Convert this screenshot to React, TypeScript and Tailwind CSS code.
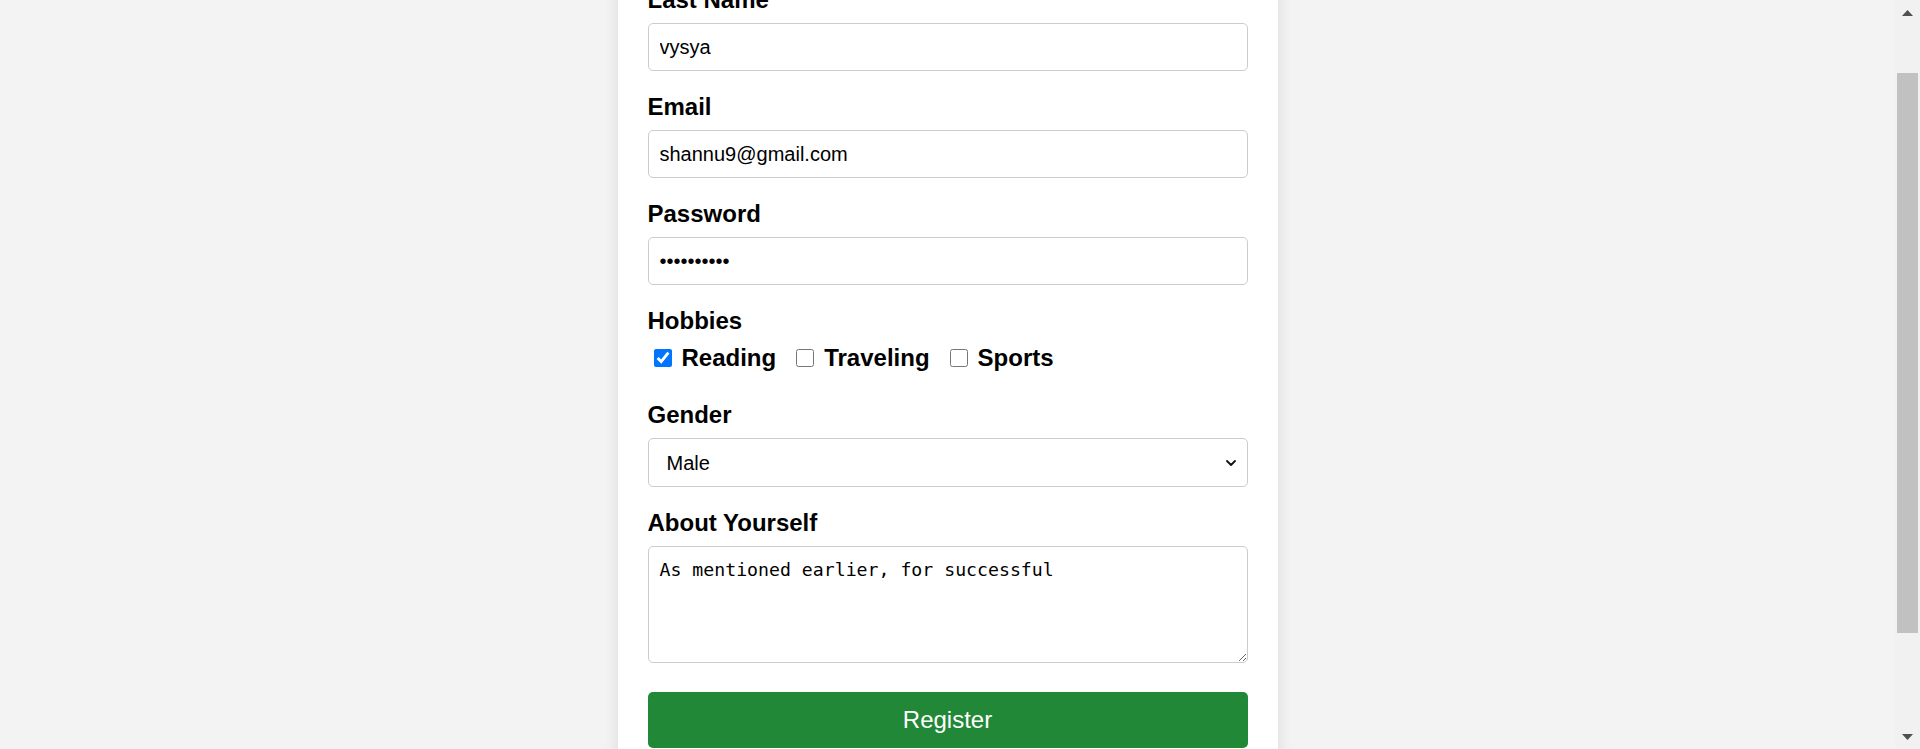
const labelCls = "block text-[24px] font-bold leading-[28px] text-black mb-[9px]"
const inputCls =
  "block w-full h-[48px] border border-[#cccccc] rounded-[5px] px-[11px] text-[20px] text-black bg-white outline-none"

const Field = ({ label, children }: { label: string; children: React.ReactNode }) => (
  <div className="mb-[22px]">
    <label className={labelCls}>{label}</label>
    {children}
  </div>
)

const Hobby = ({ name, checked }: { name: string; checked?: boolean }) => (
  <label className="flex items-center mr-[20px] text-[24px] font-bold leading-[28px] text-black">
    <input type="checkbox" defaultChecked={checked} className="w-[18px] h-[18px] m-0 mr-[10px] accent-[#0075ff]" />
    {name}
  </label>
)

// window scrollbar as it shows in the screenshot (scrolled a bit down)
const Scrollbar = () => (
  <div className="w-[25px] shrink-0 h-full flex flex-col items-center bg-[#f1f1f1]">
    <div className="h-[25px] w-full flex items-center justify-center">
      <svg width="11" height="6" viewBox="0 0 11 6">
        <path d="M0 6L5.5 0L11 6Z" fill="#505050" />
      </svg>
    </div>
    <div className="mt-[48px] w-[21px] h-[560px] bg-[#c1c1c1]" />
    <div className="flex-1" />
    <div className="h-[25px] w-full flex items-center justify-center">
      <svg width="11" height="6" viewBox="0 0 11 6">
        <path d="M0 0L5.5 6L11 0Z" fill="#505050" />
      </svg>
    </div>
  </div>
)

const App = () => {
  return (
    <div className="flex h-screen overflow-hidden bg-[#f3f3f3] font-['Liberation_Sans',Arial,sans-serif]">
      <div className="flex-1 h-full flex items-center justify-center">
        <div className="w-[660px] shrink-0 bg-white rounded-[8px] shadow-[0_0_15px_rgba(0,0,0,0.1)] px-[30px] pt-[30px] pb-[30px]">
          <h2 className="mt-[20px] mb-[60px] text-[40px] leading-[48px] font-bold text-center text-[#333]">Registration Form</h2>
          <form onSubmit={(e) => e.preventDefault()}>
            <Field label="First Name">
              <input className={inputCls} defaultValue="shannu" />
            </Field>
            <Field label="Last Name">
              <input className={inputCls} defaultValue="vysya" />
            </Field>
            <Field label="Email">
              <input type="email" className={inputCls} defaultValue="shannu9@gmail.com" />
            </Field>
            <Field label="Password">
              <input type="password" className={inputCls} defaultValue="shannu1234" />
            </Field>
            <div className="mb-[29px]">
              <span className={labelCls}>Hobbies</span>
              <div className="flex items-center h-[28px] pl-[6px]">
                <Hobby name="Reading" checked />
                <Hobby name="Traveling" />
                <Hobby name="Sports" />
              </div>
            </div>
            <Field label="Gender">
              <div className="relative">
                <select
                  defaultValue="male"
                  className="block w-full h-[49px] appearance-none border border-[#cccccc] rounded-[5px] pl-[18px] pr-[40px] text-[20px] text-black bg-white outline-none"
                >
                  <option value="male">Male</option>
                  <option value="female">Female</option>
                  <option value="other">Other</option>
                </select>
                <svg
                  className="absolute right-[12px] top-[22px] pointer-events-none"
                  width="10"
                  height="6"
                  viewBox="0 0 10 6"
                  fill="none"
                >
                  <path d="M1 1l4 4 4-4" stroke="#111" strokeWidth="1.8" strokeLinecap="round" strokeLinejoin="round" />
                </svg>
              </div>
            </Field>
            <div className="mb-[29px]">
              <label className={labelCls}>About Yourself</label>
              <textarea
                className="block w-full h-[117px] border border-[#cccccc] rounded-[5px] px-[11px] pt-[12px] text-[18.2px] leading-[21px] text-black bg-white outline-none font-['DejaVu_Sans_Mono',monospace]"
                defaultValue="As mentioned earlier, for successful"
              />
            </div>
            <button
              type="submit"
              className="block w-full h-[56px] rounded-[5px] bg-[#218838] text-white text-[24px] leading-[28px] cursor-pointer"
            >
              Register
            </button>
          </form>
          <p className="mt-[222px] text-[20px] leading-[28px] text-center text-[#333]">
            Already have an account? <a className="text-[#218838]">Login</a>
          </p>
        </div>
      </div>
      <Scrollbar />
    </div>
  )
}

export default App
